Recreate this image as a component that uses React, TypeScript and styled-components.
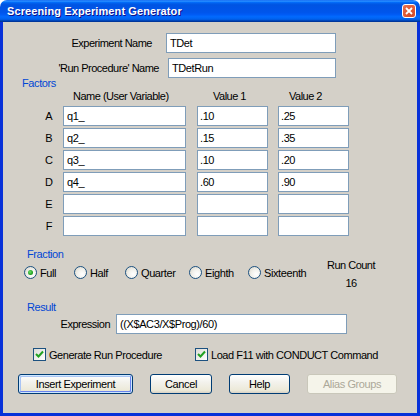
import React from "react";
import styled, { createGlobalStyle } from "styled-components";

const Global = createGlobalStyle`
  html, body { margin: 0; padding: 0; background: #ffffff; }
  body { font-family: "Liberation Sans", Arial, sans-serif; font-size: 11px; color: #000; }
  * { box-sizing: border-box; }
`;

const Window = styled.div`
  width: 420px;
  height: 416px;
  display: flex;
  flex-direction: column;
`;

const TitleBar = styled.div`
  height: 22px;
  flex: none;
  border-radius: 7px 7px 0 0;
  background: linear-gradient(180deg, #0058ee 0%, #3593ff 4%, #288eff 6%, #127dff 8%, #036ffc 10%, #0262ee 14%, #0057e5 20%, #0054e3 24%, #0055eb 56%, #005bf5 66%, #026afe 76%, #0062ef 86%, #0052d6 92%, #0040ab 94%, #003092 100%);
  display: flex;
  align-items: center;
  justify-content: space-between;
  padding: 0 4px 0 7px;
`;

const Title = styled.span`
  color: #ffffff;
  font-weight: bold;
  font-size: 11px;
  letter-spacing: 0.1px;
  text-shadow: 1px 1px #0f1089;
`;

const CloseButton = styled.div`
  width: 14px;
  height: 14px;
  border: 1px solid #ffffff;
  border-radius: 3px;
  background: radial-gradient(circle at 70% 80%, #cc4d32 0%, #e0552f 40%, #e77356 100%);
  display: flex;
  align-items: center;
  justify-content: center;
`;

const Body = styled.div`
  flex: 1;
  background: #d4d0c8;
  border: 3px solid #0831d9;
  border-top: none;
  display: flex;
  flex-direction: column;
`;

const Row = styled.div<{ $top: number; $left?: number }>`
  display: flex;
  align-items: center;
  margin-top: ${(p) => p.$top}px;
  padding-left: ${(p) => p.$left ?? 0}px;
`;

const FieldLabel = styled.span<{ $width: number }>`
  width: ${(p) => p.$width}px;
  text-align: right;
  letter-spacing: -0.5px;
  white-space: nowrap;
`;

const TextBox = styled.div<{ $width: number; $gap?: number; $pad?: number }>`
  width: ${(p) => p.$width}px;
  height: 20px;
  margin-left: ${(p) => p.$gap ?? 0}px;
  padding-left: ${(p) => p.$pad ?? 3}px;
  border: 1px solid #7f9db9;
  background: #ffffff;
  display: flex;
  align-items: center;
  letter-spacing: -0.4px;
  white-space: nowrap;
`;

const GroupLabel = styled.div<{ $top: number; $left: number }>`
  color: #0046d5;
  line-height: 13px;
  margin-top: ${(p) => p.$top}px;
  padding-left: ${(p) => p.$left}px;
  letter-spacing: -0.4px;
`;

const Grid = styled.div<{ $top: number }>`
  display: grid;
  grid-template-columns: 23px 134px 81px 71px;
  row-gap: 2px;
  padding-left: 37px;
  margin-top: ${(p) => p.$top}px;
`;

const HeaderCell = styled.div<{ $pad: number }>`
  line-height: 13px;
  padding-left: ${(p) => p.$pad}px;
  letter-spacing: -0.5px;
  white-space: nowrap;
`;

const Letter = styled.div`
  width: 18px;
  line-height: 20px;
  text-align: center;
`;

const RadioGroup = styled.div`
  display: flex;
  align-self: flex-start;
  margin-top: 7px;
`;

const RadioItem = styled.div<{ $width: number }>`
  width: ${(p) => p.$width}px;
  display: flex;
  align-items: center;
  gap: 3px;
  letter-spacing: -0.4px;
  white-space: nowrap;
`;

const RadioCircle = styled.span<{ $on?: boolean }>`
  width: 13px;
  height: 13px;
  flex: none;
  border-radius: 50%;
  border: 1px solid #1c5180;
  background: radial-gradient(circle at 65% 65%, #ffffff 0%, #f2f1ec 45%, #d6d3c6 100%);
  display: flex;
  align-items: center;
  justify-content: center;
  &::after {
    content: "";
    display: ${(p) => (p.$on ? "block" : "none")};
    width: 5px;
    height: 5px;
    border-radius: 50%;
    background: radial-gradient(circle at 40% 40%, #6ce06c 0%, #21a121 60%, #1a801a 100%);
  }
`;

const RunCount = styled.div`
  width: 50px;
  margin-left: 20px;
  display: flex;
  flex-direction: column;
  gap: 5px;
  text-align: center;
  line-height: 13px;
  letter-spacing: -0.5px;
  white-space: nowrap;
`;

const CheckItem = styled.div<{ $width?: number }>`
  width: ${(p) => (p.$width ? `${p.$width}px` : "auto")};
  display: flex;
  align-items: center;
  gap: 3px;
  letter-spacing: -0.45px;
  white-space: nowrap;
`;

const CheckBox = styled.span`
  width: 13px;
  height: 13px;
  flex: none;
  border: 1px solid #1c5180;
  background: linear-gradient(135deg, #dcdcd7 0%, #ffffff 100%);
  display: flex;
  align-items: center;
  justify-content: center;
`;

const ButtonRow = styled.div`
  display: flex;
  gap: 17px;
  margin-top: 13px;
  padding-left: 15px;
`;

const Button = styled.div<{ $width: number; $default?: boolean; $disabled?: boolean }>`
  width: ${(p) => p.$width}px;
  height: 20px;
  border-radius: 3px;
  border: 1px solid ${(p) => (p.$disabled ? "#c9c7ba" : "#003c74")};
  background: ${(p) =>
    p.$disabled
      ? "#f5f4ea"
      : "linear-gradient(180deg, #ffffff 0%, #f3f2ec 40%, #ece9d8 85%, #d6d0c5 100%)"};
  color: ${(p) => (p.$disabled ? "#aca899" : "#000000")};
  box-shadow: ${(p) =>
    p.$default
      ? "inset 0 0 0 1px #cee7ff, inset -1px -1px 0 1px #6982ee, inset 1px 1px 0 1px #a9c4f4"
      : "none"};
  display: flex;
  align-items: center;
  justify-content: center;
  letter-spacing: -0.4px;
  white-space: nowrap;
`;

const factors = [
  { l: "A", n: "q1_", v1: ".10", v2: ".25" },
  { l: "B", n: "q2_", v1: ".15", v2: ".35" },
  { l: "C", n: "q3_", v1: ".10", v2: ".20" },
  { l: "D", n: "q4_", v1: ".60", v2: ".90" },
  { l: "E", n: "", v1: "", v2: "" },
  { l: "F", n: "", v1: "", v2: "" },
];

const radios = [
  { label: "Full", w: 50, on: true },
  { label: "Half", w: 51 },
  { label: "Quarter", w: 64 },
  { label: "Eighth", w: 59 },
  { label: "Sixteenth", w: 58 },
];

const Check = () => (
  <svg width="9" height="9" viewBox="0 0 9 9">
    <polyline points="1,4 3.5,6.5 8,1.5" fill="none" stroke="#21a121" strokeWidth="2" />
  </svg>
);

export default function App() {
  return (
    <Window>
      <Global />
      <TitleBar>
        <Title>Screening Experiment Generator</Title>
        <CloseButton>
          <svg width="8" height="8" viewBox="0 0 8 8">
            <path d="M1 1 L7 7 M7 1 L1 7" stroke="#ffffff" strokeWidth="1.8" />
          </svg>
        </CloseButton>
      </TitleBar>
      <Body>
        <Row $top={11}>
          <FieldLabel $width={149}>Experiment Name</FieldLabel>
          <TextBox $width={170} $gap={14}>TDet</TextBox>
        </Row>
        <Row $top={5}>
          <FieldLabel $width={156}>'Run Procedure' Name</FieldLabel>
          <TextBox $width={168} $gap={9}>TDetRun</TextBox>
        </Row>
        <GroupLabel $top={-1} $left={19}>Factors</GroupLabel>
        <Grid $top={0}>
          <span />
          <HeaderCell $pad={10}>Name (User Variable)</HeaderCell>
          <HeaderCell $pad={16}>Value 1</HeaderCell>
          <HeaderCell $pad={11}>Value 2</HeaderCell>
        </Grid>
        <Grid $top={3}>
          {factors.map((f) => (
            <React.Fragment key={f.l}>
              <Letter>{f.l}</Letter>
              <TextBox $width={123}>{f.n}</TextBox>
              <TextBox $width={71} $pad={2}>{f.v1}</TextBox>
              <TextBox $width={71} $pad={2}>{f.v2}</TextBox>
            </React.Fragment>
          ))}
        </Grid>
        <GroupLabel $top={12} $left={24}>Fraction</GroupLabel>
        <Row $top={-2} $left={21}>
          <RadioGroup>
            {radios.map((r) => (
              <RadioItem key={r.label} $width={r.w}>
                <RadioCircle $on={r.on} />
                {r.label}
              </RadioItem>
            ))}
          </RadioGroup>
          <RunCount>
            <span>Run Count</span>
            <span>16</span>
          </RunCount>
        </Row>
        <GroupLabel $top={11} $left={24}>Result</GroupLabel>
        <Row $top={0}>
          <FieldLabel $width={107}>Expression</FieldLabel>
          <TextBox $width={231} $gap={6}>((X$AC3/X$Prog)/60)</TextBox>
        </Row>
        <Row $top={14} $left={30}>
          <CheckItem $width={162}>
            <CheckBox><Check /></CheckBox>
            Generate Run Procedure
          </CheckItem>
          <CheckItem>
            <CheckBox><Check /></CheckBox>
            Load F11 with CONDUCT Command
          </CheckItem>
        </Row>
        <ButtonRow>
          <Button $width={115} $default>Insert Experiment</Button>
          <Button $width={62}>Cancel</Button>
          <Button $width={61}>Help</Button>
          <Button $width={90} $disabled>Alias Groups</Button>
        </ButtonRow>
      </Body>
    </Window>
  );
}
